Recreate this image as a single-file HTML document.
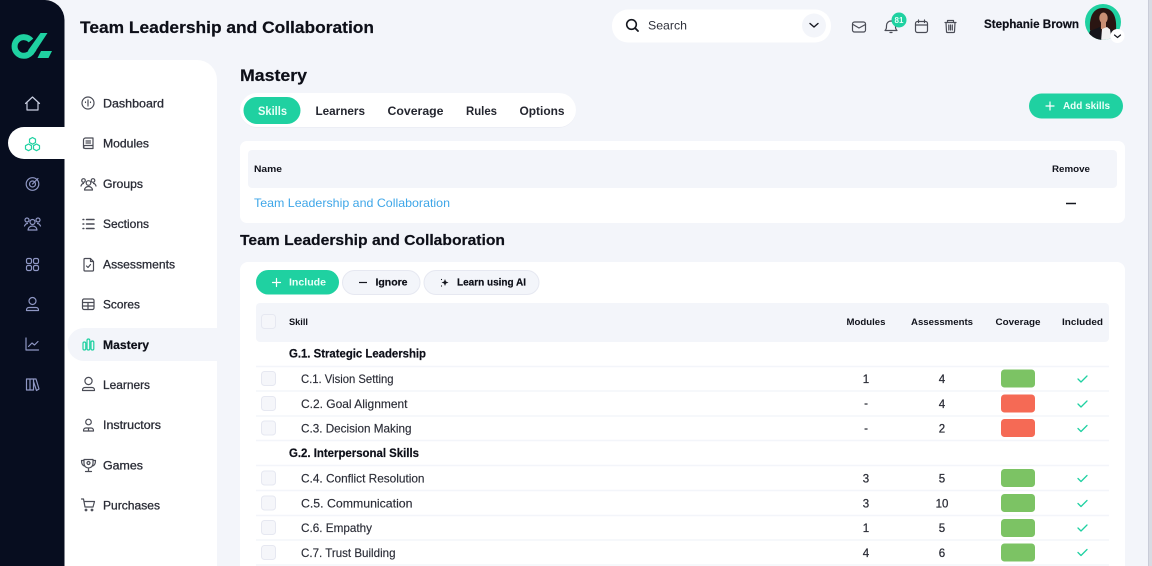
<!DOCTYPE html>
<html><head><meta charset="utf-8"><style>
html,body{margin:0;padding:0;width:1152px;height:566px;overflow:hidden;background:#f3f5fa}
svg{display:block;filter:blur(.3px)}
text{font-family:"Liberation Sans",sans-serif;fill:#222530}
.b{font-weight:bold;fill:#0d0f18;stroke:#0d0f18;stroke-width:.2px}
.n{font-size:12px;fill:#2a2c36;stroke:#2a2c36;stroke-width:.3px}
.r{font-size:12px;fill:#2a2c36;stroke:#2a2c36;stroke-width:.15px}
.t{font-size:11.5px;text-anchor:middle;fill:#2a2c36;stroke:#2a2c36;stroke-width:.25px}
.h{font-size:9.5px;font-weight:bold;fill:#11131c}
.i{fill:none;stroke:#4a4c56;stroke-width:1.2;stroke-linecap:round;stroke-linejoin:round}
.d{fill:none;stroke:#8f97c4;stroke-width:1.2;stroke-linecap:round;stroke-linejoin:round}
.g{fill:none;stroke:#1fd1a1;stroke-width:1.2;stroke-linecap:round;stroke-linejoin:round}
.cb{fill:#f5f6fa;stroke:#e6e8f1;stroke-width:1}
.l{stroke:#f3f5fa;stroke-width:1.4}
</style></head><body>
<svg width="1152" height="566" viewBox="0 0 1152 566" xmlns="http://www.w3.org/2000/svg">
<defs><clipPath id="av"><circle cx="1103" cy="22" r="18"/></clipPath></defs>
<rect width="1152" height="566" fill="#f3f5fa"/>
<rect x="1148" y="0" width="4" height="566" fill="#c9ccd8"/>
<rect x="1149" y="0" width="3" height="566" fill="#f3f5fa" opacity=".35"/>

<!-- dark rail -->
<path d="M0 0H44A20 20 0 0 1 64.500 20V566H0Z" fill="#070d1f"/>
<path d="M64.500 60H197A20 20 0 0 1 217 80V566H64.500Z" fill="#fff"/>
<path d="M64.500 127H24A16 16 0 0 0 24 159H64.500Z" fill="#fff"/>
<path d="M217 328H84A16.500 16.500 0 0 0 84 361H217Z" fill="#f3f5fa"/>

<!-- logo -->
<path d="M31 40.500A9.300 9.300 0 1 0 30.500 53L34 48.500" fill="none" stroke="#1fd1a1" stroke-width="6"/>
<path d="M40.500 33H47.500L33 55 28 50.500Z" fill="#1fd1a1"/>
<path d="M41 51H52L48.500 58H37.500Z" fill="#1fd1a1"/>

<!-- rail icons -->
<path class="d" style="stroke:#c8cde0" d="M25.500 103.500L32.500 97L39.500 103.500M27 102.500V110H38V102.500"/>
<g class="g"><path d="M32.500 137.500l3 1.700v3.300l-3 1.700-3-1.700v-3.300Z"/><path d="M28.500 144l3 1.700v3.300l-3 1.700-3-1.700v-3.300Z"/><path d="M36.500 144l3 1.700v3.300l-3 1.700-3-1.700v-3.300Z"/></g>
<g class="d"><circle cx="32.500" cy="184" r="6.300"/><circle cx="32.500" cy="184" r="3"/><path d="M32.500 184L38 178.500"/></g>
<g class="d"><circle cx="32.500" cy="222" r="2.500"/><circle cx="27" cy="220" r="2"/><circle cx="38" cy="220" r="2"/><path d="M28 230a4.500 4 0 0 1 9 0ZM24.500 226c1-2 2-2.500 3-2.500M40.500 226c-1-2-2-2.500-3-2.500"/></g>
<g class="d"><rect x="26.500" y="258.500" width="5" height="5" rx="1.500"/><rect x="33.500" y="258.500" width="5" height="5" rx="1.500"/><rect x="26.500" y="265.500" width="5" height="5" rx="1.500"/><rect x="33.500" y="265.500" width="5" height="5" rx="1.500"/></g>
<g class="d"><circle cx="32.500" cy="301" r="3.500"/><path d="M26.500 310.500a2.500 2.500 0 0 1 2.500-3h7a2.500 2.500 0 0 1 2.500 3Z"/></g>
<path class="d" d="M26 338V350H38.500M28.500 346.500L32 343L34.500 345L38 341.500"/>
<path class="d" d="M26.500 379h3.500v11h-3.500zM30 379h3.500v11H30zM33.500 379h2.500l3 10-2.500 1.500-3-9"/>

<!-- nav icons -->
<g class="i"><circle cx="88" cy="103" r="6"/><path d="M88 100v5M85.500 102v.5M90.500 102v.5M88 105.500v.5"/></g>
<g class="i"><path d="M83.500 148V140a2 2 0 0 1 2-2h7.500v10.500H85.500a2 2 0 0 1-2-1.500 2 2 0 0 1 2-1.500H93M86 141h4.500M86 143h4.500"/></g>
<g class="i"><circle cx="88.500" cy="183" r="2.300"/><circle cx="83.500" cy="180.500" r="1.800"/><circle cx="93" cy="180.500" r="1.800"/><path d="M84.500 190a4 3.500 0 0 1 8 0ZM81 186c.5-1.500 1.500-2.500 2.500-2.500M96 186c-.5-1.500-1.500-2.500-2.500-2.500"/></g>
<g class="i" style="stroke-width:1.500"><path d="M86.500 219.500H94M86.500 224H94M86.500 228.500H94M83 219.500h.8M83 224h.8M83 228.500h.8"/></g>
<g class="i"><path d="M85 258.500h5.500l3 3V270a1 1 0 0 1-1 1H85a1 1 0 0 1-1-1v-10.500a1 1 0 0 1 1-1ZM90.500 258.500v3h3M86.500 266l1.500 1.500 2.500-3"/></g>
<g class="i"><rect x="82.500" y="299" width="11.500" height="10.500" rx="1.500"/><path d="M82.500 302.500h11.500M82.500 306h11.500M88 302.500v7"/></g>
<g class="g"><rect x="83" y="342" width="2.800" height="8" rx="1.400"/><rect x="87" y="339" width="2.800" height="11" rx="1.400"/><rect x="91" y="341" width="2.800" height="9" rx="1.400"/></g>
<g class="i"><circle cx="88.500" cy="381" r="3.600"/><path d="M82.500 390.500a2.500 2.500 0 0 1 2.500-3h7a2.500 2.500 0 0 1 2.500 3Z"/></g>
<g class="i"><circle cx="88.500" cy="422" r="2.800"/><path d="M83.500 431a2.500 2.500 0 0 1 2.500-3h5a2.500 2.500 0 0 1 2.500 3Z M88.500 428v3"/></g>
<g class="i"><path d="M84 459.500h9v4a4.500 4.500 0 0 1-9 0ZM84 460.500h-2.500c0 3 1 5 3 5.500M93 460.500h2.500c0 3-1 5-3 5.500M88.500 468v3M85.500 471.500h6"/><circle cx="88.500" cy="463" r="1.500"/></g>
<g class="i"><path d="M81.500 499h2l1.500 8h8l1.500-5.500H84"/><circle cx="86" cy="510" r=".8"/><circle cx="92" cy="510" r=".8"/></g>

<!-- nav labels -->
<g>
<text class="n" x="103" y="107.500" textLength="61" lengthAdjust="spacingAndGlyphs">Dashboard</text>
<text class="n" x="103" y="147.500" textLength="46" lengthAdjust="spacingAndGlyphs">Modules</text>
<text class="n" x="103" y="188" textLength="40" lengthAdjust="spacingAndGlyphs">Groups</text>
<text class="n" x="103" y="228" textLength="46" lengthAdjust="spacingAndGlyphs">Sections</text>
<text class="n" x="103" y="268.500" textLength="72" lengthAdjust="spacingAndGlyphs">Assessments</text>
<text class="n" x="103" y="308.500" textLength="37" lengthAdjust="spacingAndGlyphs">Scores</text>
<text class="n" x="103" y="389" textLength="47" lengthAdjust="spacingAndGlyphs">Learners</text>
<text class="n" x="103" y="429" textLength="58" lengthAdjust="spacingAndGlyphs">Instructors</text>
<text class="n" x="103" y="469.500" textLength="40" lengthAdjust="spacingAndGlyphs">Games</text>
<text class="n" x="103" y="509.500" textLength="57" lengthAdjust="spacingAndGlyphs">Purchases</text>
</g>
<text class="b" x="103" y="349" font-size="12" textLength="46" lengthAdjust="spacingAndGlyphs">Mastery</text>

<!-- header -->
<text class="b" x="80" y="33" font-size="17" textLength="294" lengthAdjust="spacingAndGlyphs">Team Leadership and Collaboration</text>
<rect x="612" y="9.500" width="219" height="33" rx="16" fill="#fff"/>
<circle cx="631.500" cy="24.500" r="4.800" fill="none" stroke="#15171f" stroke-width="1.600"/>
<path d="M635 28L638 31" stroke="#15171f" stroke-width="1.800" stroke-linecap="round"/>
<text x="648" y="29.500" font-size="12" style="fill:#30323c" textLength="39" lengthAdjust="spacingAndGlyphs">Search</text>
<circle cx="814" cy="25.500" r="12" fill="#f3f5fa"/>
<path d="M810 23.500L814 27L818 23.500" fill="none" stroke="#15171f" stroke-width="1.400" stroke-linecap="round"/>
<g class="i"><rect x="852.500" y="22" width="13" height="10" rx="2"/><path d="M853 24.500L859 28L865.500 24.500"/></g>
<g class="i"><path d="M885 30.500h12c-1.500-1.500-1.500-2.500-1.500-5a4.500 4.500 0 0 0-9 0c0 2.500 0 3.500-1.500 5ZM890 32.500h2"/></g>
<circle cx="899" cy="20" r="7.500" fill="#1fd1a1"/>
<text x="899" y="23" font-size="8" font-weight="bold" text-anchor="middle" style="fill:#e6fff6">81</text>
<g class="i"><rect x="915.500" y="21.500" width="12" height="11" rx="2"/><path d="M915.500 25h12M918.500 20v2.500M924.500 20v2.500"/></g>
<g class="i"><path d="M945 22.500h11M947.500 22v-1.500h6V22M946 22.500l.5 9a1 1 0 0 0 1 1h6a1 1 0 0 0 1-1l.5-9M948.800 25v5M950.500 25v5M952.300 25v5"/></g>
<text class="b" x="984" y="28" font-size="11.500" textLength="95" lengthAdjust="spacingAndGlyphs">Stephanie Brown</text>

<!-- avatar -->
<circle cx="1103" cy="22" r="18" fill="#1fd1a1"/>
<g clip-path="url(#av)">
<path d="M1090 30C1089 17 1093 8 1103 8C1113 8 1117 17 1116 30L1113 37H1094Z" fill="#2a1512"/>
<ellipse cx="1103.500" cy="18" rx="4.200" ry="5.500" fill="#c98f74"/>
<path d="M1101 22h5v7h-5z" fill="#c98f74"/>
<path d="M1086 42L1090 31L1100 27L1104 41Z" fill="#14141a"/>
<path d="M1102 29L1107 27L1112 31L1114 42H1101Z" fill="#f1f1f1"/>
<path d="M1110 29L1116 32L1118 42H1112Z" fill="#16161c"/>
</g>
<circle cx="1117.500" cy="36" r="7" fill="#fff"/>
<path d="M1114.500 35L1117.500 37.500L1120.500 35" fill="none" stroke="#15171f" stroke-width="1.200" stroke-linecap="round"/>

<!-- page heading & tabs -->
<text class="b" x="240" y="81" font-size="16.500" textLength="67" lengthAdjust="spacingAndGlyphs">Mastery</text>
<rect x="240" y="93" width="336" height="35" rx="17.500" fill="#eceef5"/>
<rect x="240" y="93" width="336" height="34" rx="17" fill="#fff"/>
<rect x="243.500" y="97" width="57" height="27" rx="13.500" fill="#1fd1a1"/>
<text x="258" y="115" font-size="12" font-weight="bold" style="fill:#e8fff7" textLength="29" lengthAdjust="spacingAndGlyphs">Skills</text>
<g font-size="12" font-weight="bold">
<text x="315.500" y="115" style="fill:#24262f" textLength="49.500" lengthAdjust="spacingAndGlyphs">Learners</text>
<text x="387.500" y="115" style="fill:#24262f" textLength="56" lengthAdjust="spacingAndGlyphs">Coverage</text>
<text x="466" y="115" style="fill:#24262f" textLength="31" lengthAdjust="spacingAndGlyphs">Rules</text>
<text x="519.500" y="115" style="fill:#24262f" textLength="45" lengthAdjust="spacingAndGlyphs">Options</text>
</g>
<rect x="1029" y="93.500" width="94" height="25" rx="12.500" fill="#1fd1a1"/>
<path d="M1046 106h8M1050 102v8" stroke="#fff" stroke-width="1.200" stroke-linecap="round"/>
<text x="1063" y="109" font-size="10.500" font-weight="bold" style="fill:#eafff8" textLength="47" lengthAdjust="spacingAndGlyphs">Add skills</text>

<!-- top card -->
<rect x="240" y="141" width="885" height="82" rx="7" fill="#fff"/>
<rect x="248" y="150" width="869" height="38" rx="4" fill="#f3f5fa"/>
<text class="h" x="254" y="172" textLength="28" lengthAdjust="spacingAndGlyphs">Name</text>
<text class="h" x="1052" y="172" textLength="38" lengthAdjust="spacingAndGlyphs">Remove</text>
<text x="254" y="207" font-size="12" style="fill:#3ea6e8" textLength="196" lengthAdjust="spacingAndGlyphs">Team Leadership and Collaboration</text>
<path d="M1066 203.500H1076" stroke="#15171f" stroke-width="1.500"/>
<text class="b" x="240" y="245" font-size="15" textLength="265" lengthAdjust="spacingAndGlyphs">Team Leadership and Collaboration</text>

<!-- main card -->
<path d="M248 262H1117A8 8 0 0 1 1125 270V566H240V270A8 8 0 0 1 248 262Z" fill="#fff"/>
<rect x="256" y="270" width="83" height="24.500" rx="12.250" fill="#1fd1a1"/>
<path d="M272.500 282.500h8M276.500 278.500v8" stroke="#fff" stroke-width="1.200" stroke-linecap="round"/>
<text x="289" y="285.500" font-size="10" font-weight="bold" style="fill:#eafff8" textLength="37" lengthAdjust="spacingAndGlyphs">Include</text>
<rect x="342.500" y="270.500" width="77.500" height="24" rx="12" fill="#f3f5fa" stroke="#e6e8f1"/>
<path d="M359 282.500h8" stroke="#15171f" stroke-width="1.200"/>
<text class="b" x="375.500" y="285.500" font-size="10" textLength="32" lengthAdjust="spacingAndGlyphs">Ignore</text>
<rect x="424" y="270.500" width="115" height="24" rx="12" fill="#f3f5fa" stroke="#e6e8f1"/>
<path d="M445 279l1 2.500 2.500 1-2.500 1-1 2.500-1-2.500-2.500-1 2.500-1Z" fill="#15171f"/><circle cx="441.500" cy="279.500" r=".6" fill="#15171f"/><circle cx="441.500" cy="286" r=".6" fill="#15171f"/>
<text class="b" x="457" y="285.500" font-size="10" textLength="69" lengthAdjust="spacingAndGlyphs">Learn using AI</text>

<!-- table head -->
<rect x="256" y="303" width="853" height="39" rx="4" fill="#f3f5fa"/>
<rect x="261.500" y="314.500" width="14" height="14" rx="3" class="cb"/>
<text class="h" x="289" y="325" textLength="19" lengthAdjust="spacingAndGlyphs">Skill</text>
<text class="h" x="846.500" y="325" textLength="39" lengthAdjust="spacingAndGlyphs">Modules</text>
<text class="h" x="911" y="325" textLength="62" lengthAdjust="spacingAndGlyphs">Assessments</text>
<text class="h" x="995.500" y="325" textLength="45" lengthAdjust="spacingAndGlyphs">Coverage</text>
<text class="h" x="1062" y="325" textLength="41" lengthAdjust="spacingAndGlyphs">Included</text>

<!-- row lines -->
<g class="l">
<path d="M256 366.500H1109M256 391H1109M256 416H1109M256 440.500H1109M256 465.500H1109M256 490.500H1109M256 515.500H1109M256 540H1109M256 565H1109"/>
</g>

<!-- groups -->
<text class="b" x="289" y="357.500" font-size="11.500" textLength="137" lengthAdjust="spacingAndGlyphs">G.1. Strategic Leadership</text>
<text class="b" x="289" y="457" font-size="11.500" textLength="130" lengthAdjust="spacingAndGlyphs">G.2. Interpersonal Skills</text>

<!-- checkboxes -->
<rect x="261.500" y="371.500" width="14" height="14" rx="3" class="cb"/>
<rect x="261.500" y="396.500" width="14" height="14" rx="3" class="cb"/>
<rect x="261.500" y="421" width="14" height="14" rx="3" class="cb"/>
<rect x="261.500" y="471" width="14" height="14" rx="3" class="cb"/>
<rect x="261.500" y="496" width="14" height="14" rx="3" class="cb"/>
<rect x="261.500" y="520.500" width="14" height="14" rx="3" class="cb"/>
<rect x="261.500" y="545.500" width="14" height="14" rx="3" class="cb"/>

<!-- row labels -->
<g>
<text class="r" x="301" y="383" textLength="92.500" lengthAdjust="spacingAndGlyphs">C.1. Vision Setting</text>
<text class="r" x="301" y="408" textLength="106.500" lengthAdjust="spacingAndGlyphs">C.2. Goal Alignment</text>
<text class="r" x="301" y="432.500" textLength="110.500" lengthAdjust="spacingAndGlyphs">C.3. Decision Making</text>
<text class="r" x="301" y="482.500" textLength="123.500" lengthAdjust="spacingAndGlyphs">C.4. Conflict Resolution</text>
<text class="r" x="301" y="507.500" textLength="111.500" lengthAdjust="spacingAndGlyphs">C.5. Communication</text>
<text class="r" x="301" y="532" textLength="71" lengthAdjust="spacingAndGlyphs">C.6. Empathy</text>
<text class="r" x="301" y="557" textLength="94.500" lengthAdjust="spacingAndGlyphs">C.7. Trust Building</text>
</g>

<!-- numbers -->
<g>
<text class="t" x="866" y="383">1</text><text class="t" x="942" y="383">4</text>
<text class="t" x="866" y="407">-</text><text class="t" x="942" y="408">4</text>
<text class="t" x="866" y="432">-</text><text class="t" x="942" y="432.500">2</text>
<text class="t" x="866" y="482.500">3</text><text class="t" x="942" y="482.500">5</text>
<text class="t" x="866" y="507.500">3</text><text class="t" x="942" y="507.500">10</text>
<text class="t" x="866" y="532">1</text><text class="t" x="942" y="532">5</text>
<text class="t" x="866" y="557">4</text><text class="t" x="942" y="557">6</text>
</g>

<!-- coverage -->
<rect x="1001" y="369.500" width="34" height="18" rx="3.500" fill="#7cc364"/>
<rect x="1001" y="394.500" width="34" height="18" rx="3.500" fill="#f56a55"/>
<rect x="1001" y="419" width="34" height="18" rx="3.500" fill="#f56a55"/>
<rect x="1001" y="469" width="34" height="18" rx="3.500" fill="#7cc364"/>
<rect x="1001" y="494" width="34" height="18" rx="3.500" fill="#7cc364"/>
<rect x="1001" y="519" width="34" height="18" rx="3.500" fill="#7cc364"/>
<rect x="1001" y="543.500" width="34" height="18" rx="3.500" fill="#7cc364"/>

<!-- checks -->
<g fill="none" stroke="#1fd1a1" stroke-width="1.300" stroke-linecap="round" stroke-linejoin="round">
<path d="M1078 379l3 3 6-6"/>
<path d="M1078 404l3 3 6-6"/>
<path d="M1078 428.500l3 3 6-6"/>
<path d="M1078 478.500l3 3 6-6"/>
<path d="M1078 503.500l3 3 6-6"/>
<path d="M1078 528l3 3 6-6"/>
<path d="M1078 552.500l3 3 6-6"/>
</g>
</svg>
</body></html>
